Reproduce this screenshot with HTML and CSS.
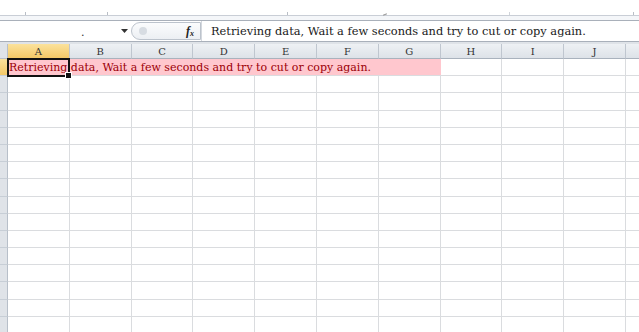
FILE: index.html
```html
<!DOCTYPE html>
<html>
<head>
<meta charset="utf-8">
<link rel="stylesheet" href="styles.css">
</head>
<body>
<div class="app">
  <div class="ribbon">
    <div class="seg s1"></div>
    <div class="seg s2"></div>
    <div class="seg s3"></div>
    <div class="seg s4"><span class="chev"></span></div>
    <div class="seg s5"></div>
    <div class="seg s6"></div>
  </div>
  <div class="ribbon-gap"></div>
  <div class="formula-bar">
    <div class="name-box">
      <span class="name-dot">.</span>
      <svg class="dd" width="7" height="4" viewBox="0 0 7 4"><path d="M0 0H7L3.5 4Z" fill="#333"/></svg>
    </div>
    <div class="fx-pill">
      <span class="knob"></span>
      <span class="fx">f<sub>x</sub></span>
    </div>
    <div class="formula-text">Retrieving data, Wait a few seconds and try to cut or copy again.</div>
  </div>
  <div class="bar-gap"></div>
  <div class="sheet">
    <div class="corner"></div>
    <div class="ch active">A</div>
    <div class="ch">B</div>
    <div class="ch">C</div>
    <div class="ch">D</div>
    <div class="ch">E</div>
    <div class="ch">F</div>
    <div class="ch">G</div>
    <div class="ch">H</div>
    <div class="ch">I</div>
    <div class="ch">J</div>
    <div class="ch last"></div>

    <div class="rh active"></div>
    <div class="cell fill span7"><span class="val">Retrieving data, Wait a few seconds and try to cut or copy again.</span><div class="sel"><span class="handle"></span></div></div>
    <div class="cell"></div><div class="cell"></div><div class="cell"></div><div class="cell last"></div>
  </div>
  <div class="rows" id="rows"></div>
</div>
<script src="app.js"></script>
</body>
</html>
```
FILE: app.js
```js
var rows = document.getElementById('rows');
for (var r = 0; r < 16; r++) {
  var h = document.createElement('div');
  h.className = 'rh';
  rows.appendChild(h);
  for (var c = 0; c < 11; c++) {
    var d = document.createElement('div');
    d.className = 'cell' + (c === 10 ? ' last' : '');
    rows.appendChild(d);
  }
}
```
FILE: styles.css
```css
html, body {
  margin: 0;
  padding: 0;
  background: #fff;
  overflow: hidden;
}
.app {
  width: 639px;
  height: 332px;
  overflow: hidden;
  font-family: "DejaVu Serif", "Liberation Serif", serif;
}
.ribbon {
  height: 15px;
  display: flex;
  align-items: flex-end;
  border-bottom: 1px solid #c9ced6;
  background: #fff;
}
.seg {
  height: 3px;
  border-right: 1px solid #b9bec6;
  position: relative;
}
.s1 { width: 25px; }
.s2 { width: 81px; }
.s3 { width: 179px; }
.s4 { width: 221px; border-right-color: #d0d4da; }
.s5 { width: 123px; }
.s6 { width: 2px; border-right: 0; }
.chev {
  position: absolute;
  left: 95px;
  bottom: 0;
  width: 4px;
  height: 1px;
  background: #999;
  transform: rotate(-20deg);
}
.ribbon-gap {
  height: 4px;
  background: #f4f6f9;
  border-bottom: 1px solid #a9b0ba;
}
.formula-bar {
  height: 20px;
  display: flex;
  background: #fff;
  border-bottom: 1px solid #a9b0ba;
}
.name-box {
  width: 131px;
  display: flex;
  align-items: center;
}
.name-dot {
  font-size: 11px;
  color: #333;
  margin-left: 81px;
  margin-top: 3px;
}
.dd {
  margin-left: 36px;
  margin-top: -1px;
}
.fx-pill {
  width: 70px;
  margin: 1px 0;
  border: 1px solid #bcc3cc;
  border-radius: 9px 0 0 9px;
  background: linear-gradient(#fbfcfd, #eceff3);
  display: flex;
  align-items: center;
  box-sizing: border-box;
}
.knob {
  width: 8px;
  height: 8px;
  border-radius: 50%;
  background: #d7dce2;
  margin-left: 7px;
}
.fx {
  margin-left: auto;
  margin-right: 6px;
  font-family: "Liberation Serif", serif;
  font-style: italic;
  font-size: 12px;
  color: #222;
  font-weight: bold;
}
.fx sub {
  font-size: 8px;
  vertical-align: -1px;
}
.formula-text {
  flex: 1;
  padding-left: 9px;
  font-size: 11.4px;
  line-height: 20px;
  color: #1a1a1a;
  white-space: nowrap;
  border-left: 1px solid #d4d8de;
}
.bar-gap {
  height: 2px;
  background: #dfe3e8;
}
.sheet, .rows {
  display: grid;
  grid-template-columns: 8px repeat(10, 61.8px) 1fr;
}
.sheet {
  grid-template-rows: 15px 17.2px;
}
.rows {
  grid-auto-rows: 17.2px;
}
.corner {
  background: #dfe3e8;
  border-right: 1px solid #b7bfc9;
  border-bottom: 1px solid #b7bfc9;
}
.ch {
  background: linear-gradient(#eef1f4, #dde2e8);
  border-right: 1px solid #bfc6cf;
  border-bottom: 1px solid #a9b2bd;
  font-size: 10px;
  color: #333;
  text-align: center;
  line-height: 15px;
  box-sizing: border-box;
}
.ch.active {
  background: linear-gradient(#fbe29c, #f3c867);
  border-bottom-color: #c9a24a;
}
.ch.last { border-right: 0; }
.rh {
  background: #dfe3e8;
  border-right: 1px solid #b7bfc9;
  border-bottom: 1px solid #c7ced6;
  box-sizing: border-box;
}
.rh.active {
  background: linear-gradient(#fbe29c, #f3c867);
}
.cell {
  border-right: 1px solid #dadcdf;
  border-bottom: 1px solid #dadcdf;
  box-sizing: border-box;
}
.cell.last { border-right: 0; }
.fill {
  background: #ffc7ce;
  border-right: 0;
}
.span7 {
  grid-column: span 7;
  position: relative;
}
.val {
  display: block;
  padding-left: 1px;
  font-size: 11px;
  line-height: 17px;
  color: #9c0006;
  white-space: nowrap;
}
.sel {
  position: absolute;
  left: -1px;
  top: -1px;
  width: 63px;
  height: 19px;
  border: 2px solid #111;
  box-sizing: border-box;
}
.handle {
  position: absolute;
  right: -4px;
  bottom: -4px;
  width: 5px;
  height: 5px;
  background: #111;
  border: 1px solid #fff;
}
```
